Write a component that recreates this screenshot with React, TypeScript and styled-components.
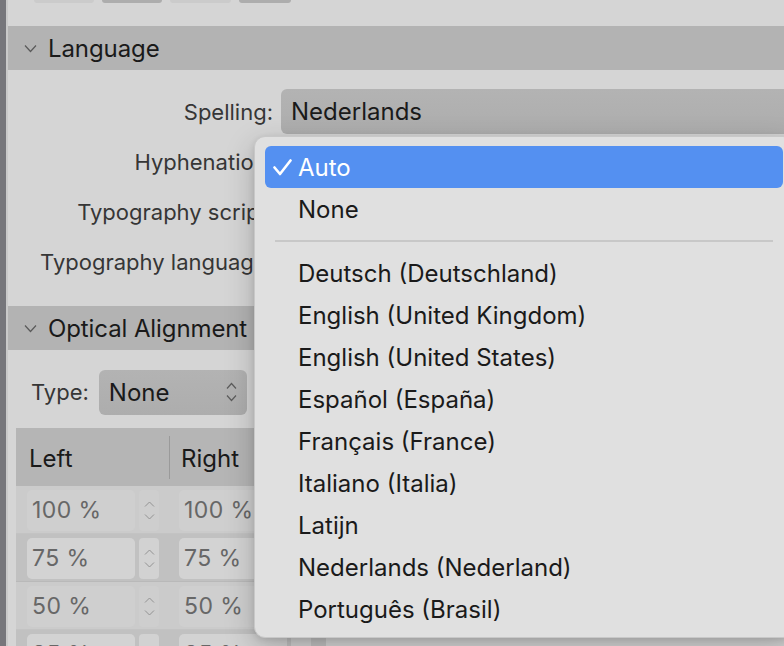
import React from 'react';
import styled, { createGlobalStyle } from 'styled-components';

const Global = createGlobalStyle`
  html, body { margin: 0; padding: 0; background: #d5d5d5; }
  body { font-family: Inter, "Noto Sans", sans-serif; -webkit-font-smoothing: antialiased; }
  #root { width: 784px; height: 646px; }
`;

const Screen = styled.div`
  position: relative;
  width: 784px;
  height: 646px;
  overflow: hidden;
  display: flex;
  align-items: flex-start;
  background: #d5d5d5;
`;

const Edge = styled.div`
  flex: 0 0 6px;
  align-self: stretch;
  background: #76767b;
`;

const EdgeLine = styled.div`
  flex: 0 0 2px;
  align-self: stretch;
  background: #c9c9c9;
`;

const Panel = styled.div`
  flex: 0 0 800px;
  display: flex;
  flex-direction: column;
  & > * {
    flex-shrink: 0;
  }
`;

const TopBar = styled.div`
  height: 26px;
  display: flex;
  align-items: flex-start;
  gap: 8px;
  padding-left: 26px;
`;

const TabStub = styled.div<{ $w: number; $dark?: boolean }>`
  width: ${p => p.$w}px;
  height: 3px;
  border-radius: 0 0 4px 4px;
  background: ${p => (p.$dark ? '#adadad' : '#cbcbcb')};
`;

const SectionHeader = styled.div`
  height: 44px;
  display: flex;
  align-items: center;
  gap: 11px;
  padding-left: 16px;
  background: #b3b3b3;
  color: #1a1a1a;
  font-size: 24px;
  letter-spacing: -0.1px;
`;

const LanguageBody = styled.div`
  display: grid;
  grid-template-columns: 265px 1fr;
  grid-auto-rows: 45px;
  column-gap: 8px;
  row-gap: 5px;
  padding: 19px 0 22px 0;
`;

const Label = styled.div`
  display: flex;
  align-items: center;
  justify-content: flex-end;
  font-size: 22px;
  color: #363636;
  white-space: nowrap;
`;

const Select = styled.div<{ $w?: number }>`
  display: flex;
  align-items: center;
  justify-content: space-between;
  ${p => (p.$w ? `width: ${p.$w}px;` : '')}
  height: 45px;
  box-sizing: border-box;
  padding: 0 10px;
  border-radius: 6px;
  background: linear-gradient(#b3b3b3, #adadad);
  font-size: 24px;
  color: #1a1a1a;
`;

const OpticalBody = styled.div`
  display: flex;
  flex-direction: column;
  padding-top: 19px;
`;

const TypeRow = styled.div`
  display: flex;
  align-items: center;
  gap: 10px;
  padding-left: 23px;
  height: 46px;
`;

const TypeLabel = styled.span`
  font-size: 22px;
  color: #363636;
`;

const Table = styled.div`
  margin: 13px 0 0 8px;
  width: 310px;
  display: flex;
  flex-direction: column;
`;

const TableHead = styled.div`
  height: 58px;
  display: grid;
  grid-template-columns: 153px 1fr;
  align-items: center;
  background: #b5b5b5;
`;

const HeadCell = styled.div<{ $divider?: boolean }>`
  height: 43px;
  display: flex;
  align-items: center;
  padding-top: 3px;
  box-sizing: border-box;
  padding-left: ${p => (p.$divider ? 11 : 13)}px;
  font-size: 24px;
  color: #1a1a1a;
  ${p => (p.$divider ? 'border-left: 1.5px solid #9a9a9a;' : '')}
`;

const Row = styled.div<{ $alt: boolean }>`
  height: 48px;
  display: grid;
  grid-template-columns: 153px 1fr;
  align-items: center;
  background: ${p => (p.$alt ? '#c1c1c1' : '#cbcbcb')};
  box-shadow: inset 0 -1px 0 rgba(0, 0, 0, 0.04);
`;

const Cell = styled.div<{ $first: boolean }>`
  display: flex;
  gap: 4px;
  padding-left: ${p => (p.$first ? 11 : 10)}px;
`;

const NumField = styled.div<{ $alt: boolean }>`
  width: 108px;
  height: 41px;
  box-sizing: border-box;
  padding-left: 5px;
  display: flex;
  align-items: center;
  border-radius: 5px;
  background: ${p => (p.$alt ? '#d3d3d3' : '#cfcfcf')};
  font-size: 23px;
  letter-spacing: 0.4px;
  color: #676767;
`;

const Stepper = styled.div<{ $alt: boolean }>`
  width: 20px;
  height: 41px;
  display: flex;
  flex-direction: column;
  align-items: center;
  justify-content: center;
  gap: 7px;
  border-radius: 4px;
  background: ${p => (p.$alt ? '#d2d2d2' : '#cecece')};
`;

const Menu = styled.div`
  position: absolute;
  left: 254px;
  top: 136px;
  width: 540px;
  box-sizing: border-box;
  padding: 9px 10px 7px 10px;
  border: 1px solid #c8c8c8;
  border-radius: 11px;
  background: #e0e0e0;
  box-shadow: 0 10px 30px rgba(0, 0, 0, 0.22), 0 2px 6px rgba(0, 0, 0, 0.1);
  display: flex;
  flex-direction: column;
`;

const MenuItem = styled.div<{ $selected?: boolean }>`
  height: 42px;
  display: flex;
  align-items: center;
  padding-left: 8px;
  border-radius: 6px;
  font-size: 24px;
  color: ${p => (p.$selected ? '#ffffff' : '#1a1a1a')};
  background: ${p => (p.$selected ? '#5490f1' : 'transparent')};
  white-space: nowrap;
`;

const CheckSlot = styled.span`
  width: 25px;
  display: flex;
  align-items: center;
`;

const Separator = styled.div`
  height: 2px;
  margin: 10px 10px;
  background: #c8c8c8;
`;

const Chevron = () => (
  <svg width="13" height="9" viewBox="0 0 13 9">
    <path d="M1 1.5 L6.5 7.5 L12 1.5" fill="none" stroke="#5a5a5a" strokeWidth="1.2" />
  </svg>
);

const UpDown = () => (
  <svg width="11" height="20" viewBox="0 0 11 20">
    <path d="M1 6.5 L5.5 1.5 L10 6.5" fill="none" stroke="#5c5c5c" strokeWidth="1.2" />
    <path d="M1 13.5 L5.5 18.5 L10 13.5" fill="none" stroke="#5c5c5c" strokeWidth="1.2" />
  </svg>
);

const StepArrow = ({ up }: { up?: boolean }) => (
  <svg width="11" height="6" viewBox="0 0 11 6">
    <path
      d={up ? 'M1 5.5 L5.5 1 L10 5.5' : 'M1 0.5 L5.5 5 L10 0.5'}
      fill="none"
      stroke="#929292"
      strokeWidth="1"
    />
  </svg>
);

const Check = () => (
  <svg width="19" height="17" viewBox="0 0 19 17">
    <path d="M1.5 8.5 L7 15 L17.5 1.5" fill="none" stroke="#ffffff" strokeWidth="2.6" strokeLinecap="round" strokeLinejoin="round" />
  </svg>
);

const languageRows = ['Spelling:', 'Hyphenation:', 'Typography script:', 'Typography language:'];
const languageValues = ['Nederlands', '', '', ''];
const percents = ['100 %', '75 %', '50 %', '25 %'];
const languages = [
  'Deutsch (Deutschland)',
  'English (United Kingdom)',
  'English (United States)',
  'Español (España)',
  'Français (France)',
  'Italiano (Italia)',
  'Latijn',
  'Nederlands (Nederland)',
  'Português (Brasil)',
];

export default function App() {
  return (
    <Screen>
      <Global />
      <Edge />
      <EdgeLine />
      <Panel>
        <TopBar>
          <TabStub $w={60} />
          <TabStub $w={60} $dark />
          <TabStub $w={61} />
          <TabStub $w={52} $dark />
        </TopBar>

        <SectionHeader>
          <Chevron />
          <span>Language</span>
        </SectionHeader>
        <LanguageBody>
          {languageRows.map((l, i) => (
            <React.Fragment key={l}>
              <Label>{l}</Label>
              <Select>
                <span>{languageValues[i]}</span>
              </Select>
            </React.Fragment>
          ))}
        </LanguageBody>

        <SectionHeader>
          <Chevron />
          <span>Optical Alignment</span>
        </SectionHeader>
        <OpticalBody>
          <TypeRow>
            <TypeLabel>Type:</TypeLabel>
            <Select $w={148}>
              <span>None</span>
              <UpDown />
            </Select>
          </TypeRow>
          <Table>
            <TableHead>
              <HeadCell>Left</HeadCell>
              <HeadCell $divider>Right</HeadCell>
            </TableHead>
            {percents.map((p, i) => {
              const alt = i % 2 === 1;
              return (
                <Row key={p} $alt={alt}>
                  {[true, false].map(first => (
                    <Cell key={String(first)} $first={first}>
                      <NumField $alt={alt}>{p}</NumField>
                      <Stepper $alt={alt}>
                        <StepArrow up />
                        <StepArrow />
                      </Stepper>
                    </Cell>
                  ))}
                </Row>
              );
            })}
          </Table>
        </OpticalBody>
      </Panel>

      <Menu>
        <MenuItem $selected>
          <CheckSlot>
            <Check />
          </CheckSlot>
          Auto
        </MenuItem>
        <MenuItem>
          <CheckSlot />
          None
        </MenuItem>
        <Separator />
        {languages.map(l => (
          <MenuItem key={l}>
            <CheckSlot />
            {l}
          </MenuItem>
        ))}
      </Menu>
    </Screen>
  );
}
